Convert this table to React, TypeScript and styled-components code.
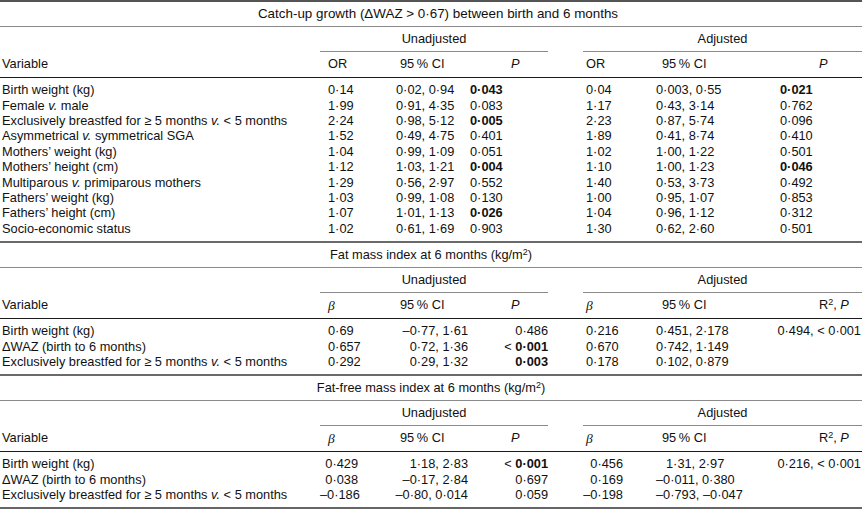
import React from "react";
import styled, { createGlobalStyle } from "styled-components";

const GlobalStyle = createGlobalStyle`
  html, body {
    margin: 0;
    padding: 0;
    background: #ffffff;
  }
  body {
    font-family: "Liberation Sans", Arial, sans-serif;
    color: #111111;
  }
`;

// variable | OR, CI, P | gap | OR, CI, P
const COLS = "320px 60px 88px 80px 35px 57px 120px 102px";
const VALUE_COLS = [2, 3, 4, 6, 7, 8];
const HEAD_PADS = [8, 20, 43, 3, 22, 59];

const Sheet = styled.div`
  width: 862px;
  font-size: 12.8px;
  line-height: 1;
  border-bottom: 2px solid #666666;
`;

const Block = styled.section<{ $first?: boolean }>`
  border-top: 2px solid ${(p) => (p.$first ? "#555555" : "#6a6a6a")};
`;

const Caption = styled.div<{ $wide?: boolean }>`
  height: 24px;
  display: flex;
  align-items: center;
  justify-content: center;
  padding-left: ${(p) => (p.$wide ? "14px" : "0")};
  font-size: ${(p) => (p.$wide ? "13.4px" : "inherit")};
  border-bottom: 1px solid #8a8a8a;
  white-space: nowrap;
`;

const Grid = styled.div`
  display: grid;
  grid-template-columns: ${COLS};
  align-items: center;
`;

const GroupRow = styled(Grid)`
  height: 25px;
  align-items: stretch;
`;

const Group = styled.div<{ $span: string }>`
  grid-column: ${(p) => p.$span};
  grid-row: 1;
  display: flex;
  align-items: center;
  justify-content: center;
  border-bottom: 1px solid #8a8a8a;
`;

const HeadRow = styled(Grid)`
  height: 25px;
  border-bottom: 1px solid #1a1a1a;
`;

const Body = styled.div`
  padding: 5px 0 4px;
`;

const Row = styled(Grid)`
  height: 15.4px;
`;

const Cell = styled.div<{ $col: number; $right?: boolean; $pad: number }>`
  grid-column: ${(p) => p.$col};
  grid-row: 1;
  white-space: nowrap;
  text-align: ${(p) => (p.$right ? "right" : "left")};
  ${(p) => (p.$right ? `padding-right: ${p.$pad}px;` : `padding-left: ${p.$pad}px;`)}
`;

const Strong = styled.b`
  font-weight: bold;
`;

const Em = styled.i`
  font-style: italic;
`;

const Beta = styled.span`
  font-family: "Liberation Serif", "Times New Roman", serif;
  font-style: italic;
  font-size: 13.5px;
`;

const Sup = styled.sup`
  font-size: 0.7em;
  line-height: 0;
  vertical-align: 0.45em;
`;

const Nudge = styled.span`
  padding-left: 10px;
`;

type Spec = { right?: boolean; pad: number }[];
type RowData = React.ReactNode[];

const ebf = (
  <>
    Exclusively breastfed for ≥ 5 months <Em>v.</Em> &lt; 5 months
  </>
);

const lt = (v: string) => (
  <>
    &lt; <Strong>{v}</Strong>
  </>
);

const orHeads = [
  "OR",
  "95\u2009% CI",
  <Em key="p">P</Em>,
  "OR",
  "95\u2009% CI",
  <Em key="p2">P</Em>,
];

const betaHeads = [
  <Beta key="b">β</Beta>,
  "95\u2009% CI",
  <Em key="p">P</Em>,
  <Beta key="b2">β</Beta>,
  "95\u2009% CI",
  <span key="r">
    R<Sup>2</Sup>, <Em>P</Em>
  </span>,
];

const catchUpRows: RowData[] = [
  ["Birth weight (kg)", "0·14", "0·02, 0·94", <Strong>0·043</Strong>, "0·04", "0·003, 0·55", <Strong>0·021</Strong>],
  [<>Female <Em>v.</Em> male</>, "1·99", "0·91, 4·35", "0·083", "1·17", "0·43, 3·14", "0·762"],
  [ebf, "2·24", "0·98, 5·12", <Strong>0·005</Strong>, "2·23", "0·87, 5·74", "0·096"],
  [<>Asymmetrical <Em>v.</Em> symmetrical SGA</>, "1·52", "0·49, 4·75", "0·401", "1·89", "0·41, 8·74", "0·410"],
  ["Mothers’ weight (kg)", "1·04", "0·99, 1·09", "0·051", "1·02", "1·00, 1·22", "0·501"],
  ["Mothers’ height (cm)", "1·12", "1·03, 1·21", <Strong>0·004</Strong>, "1·10", "1·00, 1·23", <Strong>0·046</Strong>],
  [<>Multiparous <Em>v.</Em> primiparous mothers</>, "1·29", "0·56, 2·97", "0·552", "1·40", "0·53, 3·73", "0·492"],
  ["Fathers’ weight (kg)", "1·03", "0·99, 1·08", "0·130", "1·00", "0·95, 1·07", "0·853"],
  ["Fathers’ height (cm)", "1·07", "1·01, 1·13", <Strong>0·026</Strong>, "1·04", "0·96, 1·12", "0·312"],
  ["Socio-economic status", "1·02", "0·61, 1·69", "0·903", "1·30", "0·62, 2·60", "0·501"],
];

const fatRows: RowData[] = [
  ["Birth weight (kg)", "0·69", "–0·77, 1·61", "0·486", "0·216", "0·451, 2·178", "0·494, < 0·001"],
  ["ΔWAZ (birth to 6 months)", "0·657", "0·72, 1·36", lt("0·001"), "0·670", "0·742, 1·149", ""],
  [ebf, "0·292", "0·29, 1·32", <Strong>0·003</Strong>, "0·178", "0·102, 0·879", ""],
];

const leanRows: RowData[] = [
  ["Birth weight (kg)", "0·429", "1·18, 2·83", lt("0·001"), "0·456", <Nudge>1·31, 2·97</Nudge>, "0·216, < 0·001"],
  ["ΔWAZ (birth to 6 months)", "0·038", "–0·17, 2·84", "0·697", "0·169", "–0·011, 0·380", ""],
  [ebf, "–0·186", "–0·80, 0·014", "0·059", "–0·198", "–0·793, –0·047", ""],
];

const catchUpSpec: Spec = [
  { pad: 8 },
  { pad: 16 },
  { pad: 2 },
  { pad: 3 },
  { pad: 16 },
  { pad: 20 },
];

const fatSpec: Spec = [
  { pad: 8 },
  { right: true, pad: 0 },
  { right: true, pad: 0 },
  { pad: 3 },
  { pad: 16 },
  { right: true, pad: 1 },
];

const leanSpec: Spec = [
  { right: true, pad: 22 },
  { right: true, pad: 0 },
  { right: true, pad: 0 },
  { right: true, pad: 17 },
  { pad: 16 },
  { right: true, pad: 1 },
];

type SectionProps = {
  title: React.ReactNode;
  first?: boolean;
  heads: React.ReactNode[];
  spec: Spec;
  rows: RowData[];
};

const TableSection = ({ title, first, heads, spec, rows }: SectionProps) => (
  <Block $first={first}>
    <Caption $wide={first}>
      <span>{title}</span>
    </Caption>
    <GroupRow>
      <Group $span="2 / 5">Unadjusted</Group>
      <Group $span="6 / 9">Adjusted</Group>
    </GroupRow>
    <HeadRow>
      <Cell $col={1} $pad={2}>
        Variable
      </Cell>
      {heads.map((h, i) => (
        <Cell key={i} $col={VALUE_COLS[i]} $pad={HEAD_PADS[i]}>
          {h}
        </Cell>
      ))}
    </HeadRow>
    <Body>
      {rows.map((r, ri) => (
        <Row key={ri}>
          <Cell $col={1} $pad={2}>
            {r[0]}
          </Cell>
          {r.slice(1).map((v, i) => (
            <Cell key={i} $col={VALUE_COLS[i]} $right={spec[i].right} $pad={spec[i].pad}>
              {v}
            </Cell>
          ))}
        </Row>
      ))}
    </Body>
  </Block>
);

export default function App() {
  return (
    <>
      <GlobalStyle />
      <Sheet>
        <TableSection
          first
          title={<>Catch-up growth (ΔWAZ &gt; 0·67) between birth and 6 months</>}
          heads={orHeads}
          spec={catchUpSpec}
          rows={catchUpRows}
        />
        <TableSection
          title={
            <>
              Fat mass index at 6 months (kg/m<Sup>2</Sup>)
            </>
          }
          heads={betaHeads}
          spec={fatSpec}
          rows={fatRows}
        />
        <TableSection
          title={
            <>
              Fat-free mass index at 6 months (kg/m<Sup>2</Sup>)
            </>
          }
          heads={betaHeads}
          spec={leanSpec}
          rows={leanRows}
        />
      </Sheet>
    </>
  );
}
